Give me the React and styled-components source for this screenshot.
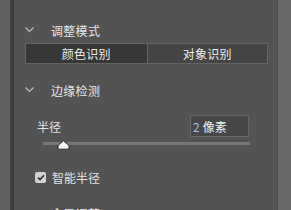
import React from "react";
import styled, { createGlobalStyle } from "styled-components";

const Global = createGlobalStyle`
  *, *::before, *::after {
    box-sizing: border-box;
  }
  html, body {
    margin: 0;
    padding: 0;
    background: #535353;
    overflow: hidden;
  }
  body {
    font-family: "Noto Sans CJK SC", "Noto Sans", sans-serif;
  }
`;

const Frame = styled.div`
  display: flex;
  width: 291px;
  height: 210px;
  overflow: hidden;
`;

const LeftRail = styled.div`
  width: 11px;
  background: #616161;
  border-right: 1px solid #3f3f3f;
  flex-shrink: 0;
`;

const Gutter = styled.div`
  width: 3px;
  background: #424242;
  border-right: 2px solid #3c3c3c;
  flex-shrink: 0;
`;

const RightRail = styled.div`
  width: 14px;
  background: #686868;
  border-left: 1px solid #4a4a4a;
  flex-shrink: 0;
`;

const Panel = styled.div`
  flex: 1;
  background: #535353;
  padding: 18px 9px 0 11px;
  display: flex;
  flex-direction: column;
  color: #e2e2e2;
  font-size: 12px;
`;

const Header = styled.div`
  display: flex;
  align-items: center;
  height: 24px;
  flex-shrink: 0;
  margin-top: ${(p) => p.$top || 0}px;
`;

const Chevron = styled.svg`
  width: 9px;
  height: 6px;
  margin-right: 17px;
  flex-shrink: 0;
`;

const HeaderText = styled.span`
  color: #e6e6e6;
  letter-spacing: 0.3px;
`;

const Segmented = styled.div`
  display: grid;
  grid-template-columns: 1fr 1fr;
  height: 21px;
  margin-top: 1px;
  border: 1px solid #646464;
  flex-shrink: 0;
`;

const Segment = styled.div`
  display: flex;
  align-items: center;
  justify-content: center;
  background: ${(p) => (p.$active ? "#373737" : "#454545")};
  border-left: ${(p) => (p.$divider ? "1px solid #646464" : "none")};
  color: #ececec;
  letter-spacing: 0.3px;
`;

const FieldRow = styled.div`
  display: flex;
  align-items: center;
  justify-content: space-between;
  height: 22px;
  margin-top: 13px;
  padding: 0 19px 0 12px;
  flex-shrink: 0;
`;

const Label = styled.span`
  color: #e2e2e2;
`;

const ValueBox = styled.div`
  width: 59px;
  height: 22px;
  border: 1px solid #666666;
  background: #474747;
  display: flex;
  align-items: center;
  padding-left: 2px;
  color: #f0f0f0;
`;

const Num = styled.span`
  color: #9fc3ea;
  margin-right: 3px;
`;

const Slider = styled.div`
  position: relative;
  height: 16px;
  margin: 5px 18px 0 18px;
  flex-shrink: 0;
`;

const Track = styled.div`
  height: 3px;
  background: #777777;
`;

const Thumb = styled.svg`
  position: absolute;
  left: 14px;
  top: -2px;
  width: 13px;
  height: 10px;
`;

const CheckRow = styled.label`
  display: flex;
  align-items: center;
  height: 14px;
  margin-top: 12px;
  padding-left: 10px;
  flex-shrink: 0;
`;

const Box = styled.span`
  width: 11px;
  height: 11px;
  border-radius: 2px;
  background: #d2d2d2;
  display: flex;
  align-items: center;
  justify-content: center;
  margin-right: 6px;
`;

const ChevronIcon = () => (
  <Chevron viewBox="0 0 9 6">
    <path d="M0.5 0.5 L4.5 4.5 L8.5 0.5" fill="none" stroke="#bdbdbd" strokeWidth="1.2" />
  </Chevron>
);

export default function App() {
  return (
    <>
      <Global />
      <Frame>
        <LeftRail />
        <Gutter />
        <Panel>
          <Header>
            <ChevronIcon />
            <HeaderText>调整模式</HeaderText>
          </Header>
          <Segmented>
            <Segment $active>颜色识别</Segment>
            <Segment $divider>对象识别</Segment>
          </Segmented>
          <Header $top={14}>
            <ChevronIcon />
            <HeaderText>边缘检测</HeaderText>
          </Header>
          <FieldRow>
            <Label>半径</Label>
            <ValueBox>
              <Num>2</Num>像素
            </ValueBox>
          </FieldRow>
          <Slider>
            <Track />
            <Thumb viewBox="0 0 13 10">
              <path
                d="M6.5 0.8 L12 5.5 L12 9.2 L1 9.2 L1 5.5 Z"
                fill="#f4f4f4"
                stroke="#2a2a2a"
                strokeWidth="1"
                strokeLinejoin="round"
              />
            </Thumb>
          </Slider>
          <CheckRow>
            <Box>
              <svg width="8" height="7" viewBox="0 0 8 7">
                <path d="M1 3.5 L3 5.5 L7 1.2" fill="none" stroke="#2e2e2e" strokeWidth="1.6" />
              </svg>
            </Box>
            <Label>智能半径</Label>
          </CheckRow>
          <Header $top={17}>
            <ChevronIcon />
            <HeaderText>全局调整</HeaderText>
          </Header>
        </Panel>
        <RightRail />
      </Frame>
    </>
  );
}
